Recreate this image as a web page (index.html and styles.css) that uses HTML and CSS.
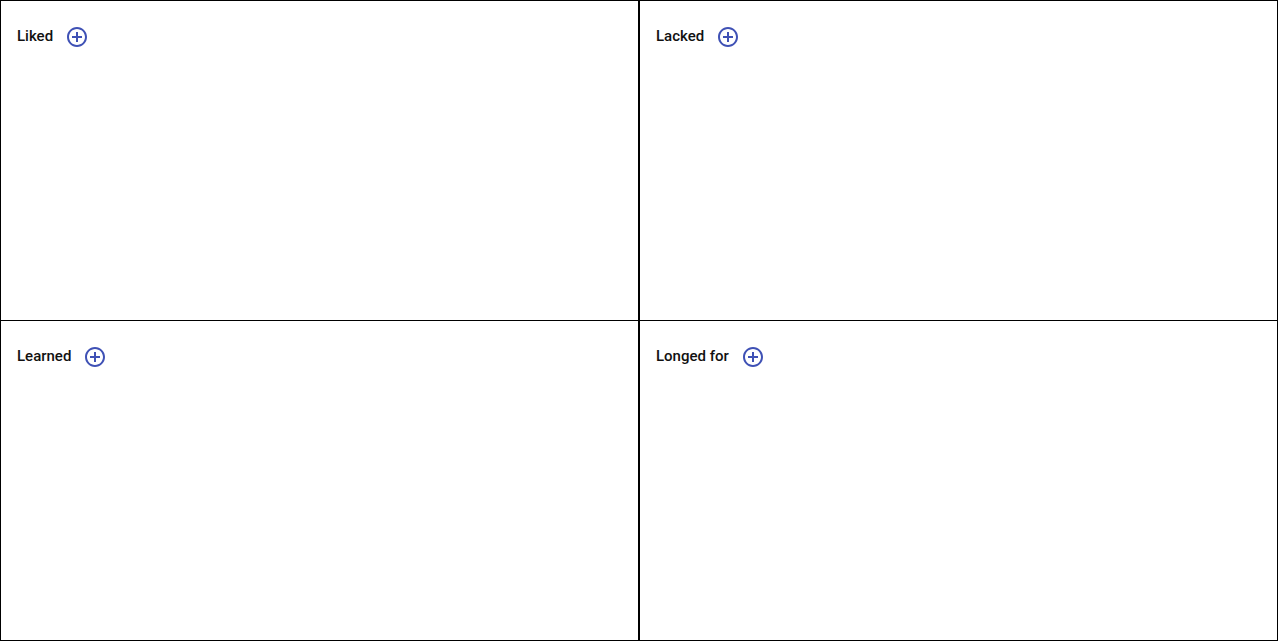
FILE: index.html
```html
<!DOCTYPE html>
<html>
<head>
<meta charset="utf-8">
<link rel="stylesheet" href="styles.css">
</head>
<body>
<div class="board">
  <section class="cell top">
    <div class="head"><span class="title">Liked</span><span class="add"><svg viewBox="0 0 24 24" width="24" height="24"><path d="M13 7h-2v4H7v2h4v4h2v-4h4v-2h-4V7zm-1-5C6.48 2 2 6.48 2 12s4.48 10 10 10 10-4.48 10-10S17.52 2 12 2zm0 18c-4.41 0-8-3.59-8-8s3.59-8 8-8 8 3.59 8 8-3.59 8-8 8z"/></svg></span></div>
  </section>
  <section class="cell top">
    <div class="head"><span class="title">Lacked</span><span class="add"><svg viewBox="0 0 24 24" width="24" height="24"><path d="M13 7h-2v4H7v2h4v4h2v-4h4v-2h-4V7zm-1-5C6.48 2 2 6.48 2 12s4.48 10 10 10 10-4.48 10-10S17.52 2 12 2zm0 18c-4.41 0-8-3.59-8-8s3.59-8 8-8 8 3.59 8 8-3.59 8-8 8z"/></svg></span></div>
  </section>
  <section class="cell bottom">
    <div class="head"><span class="title">Learned</span><span class="add"><svg viewBox="0 0 24 24" width="24" height="24"><path d="M13 7h-2v4H7v2h4v4h2v-4h4v-2h-4V7zm-1-5C6.48 2 2 6.48 2 12s4.48 10 10 10 10-4.48 10-10S17.52 2 12 2zm0 18c-4.41 0-8-3.59-8-8s3.59-8 8-8 8 3.59 8 8-3.59 8-8 8z"/></svg></span></div>
  </section>
  <section class="cell bottom">
    <div class="head"><span class="title">Longed for</span><span class="add"><svg viewBox="0 0 24 24" width="24" height="24"><path d="M13 7h-2v4H7v2h4v4h2v-4h4v-2h-4V7zm-1-5C6.48 2 2 6.48 2 12s4.48 10 10 10 10-4.48 10-10S17.52 2 12 2zm0 18c-4.41 0-8-3.59-8-8s3.59-8 8-8 8 3.59 8 8-3.59 8-8 8z"/></svg></span></div>
  </section>
</div>
</body>
</html>
```
FILE: styles.css
```css
html, body {
  margin: 0;
  padding: 0;
  background: #fff;
}
body {
  font-family: Roboto, "Liberation Sans", Arial, sans-serif;
  color: #111;
}
.board {
  display: grid;
  grid-template-columns: 639px 639px;
  grid-template-rows: 321px 320px;
  width: 1278px;
  height: 641px;
}
.cell {
  box-sizing: border-box;
  border: 1px solid #000;
  padding: 16px;
}
.cell.bottom {
  border-top: none;
}
.head {
  display: flex;
  align-items: center;
  height: 38px;
  gap: 12px;
}
.title {
  font-size: 15px;
  font-weight: 500;
}
.add {
  display: flex;
  width: 24px;
  height: 24px;
  margin-top: 2px;
}
.add svg {
  fill: #3f51b5;
}
```
